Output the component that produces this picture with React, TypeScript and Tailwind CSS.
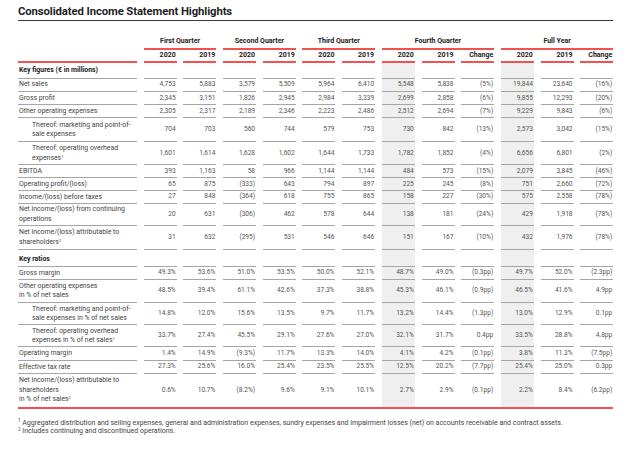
import React from "react";

type Row = {
  label: React.ReactNode;
  values?: string[];
  h: string;
  indent?: boolean;
  section?: boolean;
  last?: boolean;
};

const GRID = "grid grid-cols-[119px_repeat(12,33px)] gap-x-[6.7px]";
const SHADED = [6, 9];

const rows: Row[] = [
  { label: "Key figures (€ in millions)", h: "h-[15.5px]", section: true },
  {
    label: "Net sales",
    h: "h-[13.2px]",
    values: ["4,753", "5,883", "3,579", "5,509", "5,964", "6,410", "5,548", "5,838", "(5%)", "19,844", "23,640", "(16%)"],
  },
  {
    label: "Gross profit",
    h: "h-[13.6px]",
    values: ["2,345", "3,151", "1,826", "2,945", "2,984", "3,339", "2,699", "2,858", "(6%)", "9,855", "12,293", "(20%)"],
  },
  {
    label: "Other operating expenses",
    h: "h-[13px]",
    values: ["2,305", "2,317", "2,189", "2,346", "2,223", "2,486", "2,512", "2,694", "(7%)", "9,229", "9,843", "(6%)"],
  },
  {
    label: (
      <>
        Thereof: marketing and point-of-
        <br />
        sale expenses
      </>
    ),
    indent: true,
    h: "h-[23.4px]",
    values: ["704", "703", "560", "744", "579", "753", "730", "842", "(13%)", "2,573", "3,042", "(15%)"],
  },
  {
    label: (
      <>
        Thereof: operating overhead
        <br />
        expenses<sup className="text-[4px]">1</sup>
      </>
    ),
    indent: true,
    h: "h-[23.8px]",
    values: ["1,601", "1,614", "1,628", "1,602", "1,644", "1,733", "1,782", "1,852", "(4%)", "6,656", "6,801", "(2%)"],
  },
  {
    label: "EBITDA",
    h: "h-[12.8px]",
    values: ["393", "1,163", "58", "966", "1,144", "1,144", "484", "573", "(15%)", "2,079", "3,845", "(46%)"],
  },
  {
    label: "Operating profit/(loss)",
    h: "h-[12.7px]",
    values: ["65", "875", "(333)", "643", "794", "897", "225", "245", "(8%)", "751", "2,660", "(72%)"],
  },
  {
    label: "Income/(loss) before taxes",
    h: "h-[12.7px]",
    values: ["27", "848", "(364)", "618", "755", "865", "158", "227", "(30%)", "575", "2,558", "(78%)"],
  },
  {
    label: (
      <>
        Net income/(loss) from continuing
        <br />
        operations
      </>
    ),
    h: "h-[22px]",
    values: ["20", "631", "(306)", "462", "578", "644", "138", "181", "(24%)", "429", "1,918", "(78%)"],
  },
  {
    label: (
      <>
        Net income/(loss) attributable to
        <br />
        shareholders<sup className="text-[4px]">2</sup>
      </>
    ),
    h: "h-[24.3px]",
    values: ["31", "632", "(295)", "531", "546", "646", "151", "167", "(10%)", "432", "1,976", "(78%)"],
  },
  { label: "Key ratios", h: "h-[17px]", section: true },
  {
    label: "Gross margin",
    h: "h-[12.7px]",
    values: ["49.3%", "53.6%", "51.0%", "53.5%", "50.0%", "52.1%", "48.7%", "49.0%", "(0.3pp)", "49.7%", "52.0%", "(2.3pp)"],
  },
  {
    label: (
      <>
        Other operating expenses
        <br />
        in % of net sales
      </>
    ),
    h: "h-[23px]",
    values: ["48.5%", "39.4%", "61.1%", "42.6%", "37.3%", "38.8%", "45.3%", "46.1%", "(0.9pp)", "46.5%", "41.6%", "4.9pp"],
  },
  {
    label: (
      <>
        Thereof: marketing and point-of-
        <br />
        sale expenses in % of net sales
      </>
    ),
    indent: true,
    h: "h-[22.6px]",
    values: ["14.8%", "12.0%", "15.6%", "13.5%", "9.7%", "11.7%", "13.2%", "14.4%", "(1.3pp)", "13.0%", "12.9%", "0.1pp"],
  },
  {
    label: (
      <>
        Thereof: operating overhead
        <br />
        expenses in % of net sales<sup className="text-[4px]">1</sup>
      </>
    ),
    indent: true,
    h: "h-[21.7px]",
    values: ["33.7%", "27.4%", "45.5%", "29.1%", "27.6%", "27.0%", "32.1%", "31.7%", "0.4pp", "33.5%", "28.8%", "4.8pp"],
  },
  {
    label: "Operating margin",
    h: "h-[14.3px]",
    values: ["1.4%", "14.9%", "(9.3%)", "11.7%", "13.3%", "14.0%", "4.1%", "4.2%", "(0.1pp)", "3.8%", "11.3%", "(7.5pp)"],
  },
  {
    label: "Effective tax rate",
    h: "h-[12.4px]",
    values: ["27.3%", "25.6%", "16.0%", "25.4%", "23.5%", "25.5%", "12.5%", "20.2%", "(7.7pp)", "25.4%", "25.0%", "0.3pp"],
  },
  {
    label: (
      <>
        Net income/(loss) attributable to
        <br />
        shareholders
        <br />
        in % of net sales<sup className="text-[4px]">2</sup>
      </>
    ),
    h: "h-[35px]",
    last: true,
    values: ["0.6%", "10.7%", "(8.2%)", "9.6%", "9.1%", "10.1%", "2.7%", "2.9%", "(0.1pp)", "2.2%", "8.4%", "(6.2pp)"],
  },
];

const groups = [
  { name: "First Quarter", span: "col-span-2" },
  { name: "Second Quarter", span: "col-span-2" },
  { name: "Third Quarter", span: "col-span-2" },
  { name: "Fourth Quarter", span: "col-span-3" },
  { name: "Full Year", span: "col-span-3" },
];

const years = ["2020", "2019", "2020", "2019", "2020", "2019", "2020", "2019", "Change", "2020", "2019", "Change"];

const DataRow = ({ row }: { row: Row }) => {
  const line = row.last ? "" : "border-b border-[#a6a6a6]";
  const values = row.values ?? Array(12).fill("");
  return (
    <div className={`${GRID} ${row.h} ${row.last ? "border-b-2 border-[#f05252]" : ""}`}>
      <div
        className={`flex whitespace-nowrap text-[6.9px] leading-[9.4px] ${line} ${
          row.section ? "items-end pb-[2px] font-bold text-[#222]" : "items-center pt-[1px] text-[#444]"
        } ${row.indent ? "pl-[14px]" : "pl-[1px]"}`}
      >
        <span>{row.label}</span>
      </div>
      {values.map((v, i) => (
        <div
          key={i}
          className={`flex items-center justify-end pt-[1px] pr-[1px] text-[#555] ${line} ${
            SHADED.includes(i) ? "bg-[#efefef]" : ""
          }`}
        >
          {v}
        </div>
      ))}
    </div>
  );
};

export default function App() {
  return (
    <div className="w-[641px] h-[451px] bg-white px-[18px] pt-[5px] font-['Roboto',sans-serif] text-[6.6px]">
      <div className="w-[595px]">
        <h1 className="border-b border-[#3a3a3a] pb-[1px] text-[11.3px] font-bold leading-[14px] tracking-[-0.1px] text-[#1f1f1f]">
          Consolidated Income Statement Highlights
        </h1>

        <div className={`${GRID} mt-[15px] h-[13px] text-[7px]`}>
          <div />
          {groups.map((g) => (
            <div
              key={g.name}
              className={`${g.span} flex items-center justify-center border-b-2 border-[#f05252] pb-[1px] font-bold text-[#222]`}
            >
              {g.name}
            </div>
          ))}
        </div>

        <div className={`${GRID} h-[14px] text-[7px]`}>
          <div className="border-b-2 border-[#f05252]" />
          {years.map((y, i) => (
            <div
              key={i}
              className="flex items-center justify-end border-b-2 border-[#f05252] pr-[1px] font-bold text-[#222]"
            >
              {y}
            </div>
          ))}
        </div>

        {rows.map((r, i) => (
          <DataRow key={i} row={r} />
        ))}

        <div className="mt-[10px] text-[7px] leading-[8.5px] text-[#444]">
          <p>
            <sup className="text-[4.5px]">1</sup> Aggregated distribution and selling expenses, general and administration
            expenses, sundry expenses and impairment losses (net) on accounts receivable and contract assets.
          </p>
          <p>
            <sup className="text-[4.5px]">2</sup> Includes continuing and discontinued operations.
          </p>
        </div>
      </div>
    </div>
  );
}
